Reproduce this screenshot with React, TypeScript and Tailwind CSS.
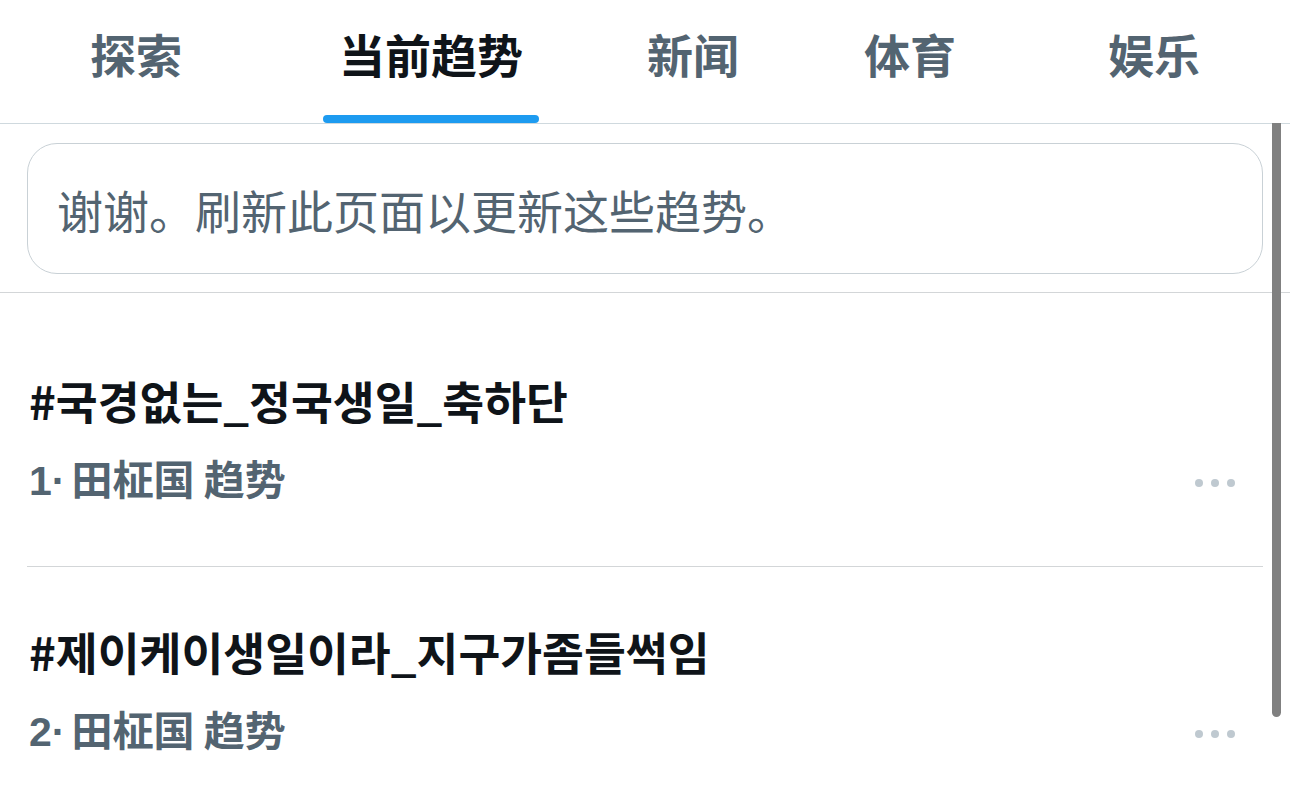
import React from 'react';

const tabs = [
  { label: '探索', width: 'w-[272px]' },
  { label: '当前趋势', width: 'w-[318px]', active: true },
  { label: '新闻', width: 'w-[206px]' },
  { label: '体育', width: 'w-[228px]' },
  { label: '娱乐', width: 'w-[260px]' },
];

const trends = [
  { rank: 1, tag: '#국경없는_정국생일_축하단', context: '田柾国 趋势' },
  { rank: 2, tag: '#제이케이생일이라_지구가좀들썩임', context: '田柾国 趋势' },
];

const MoreDots: React.FC = () => (
  <div className="flex items-center gap-[8px] pt-[8px]">
    <span className="w-[8px] h-[8px] rounded-full bg-[#bfc9d0]" />
    <span className="w-[8px] h-[8px] rounded-full bg-[#bfc9d0]" />
    <span className="w-[8px] h-[8px] rounded-full bg-[#bfc9d0]" />
  </div>
);

const App: React.FC = () => {
  return (
    <div className="relative w-[1290px] h-[804px] overflow-hidden bg-white font-['Noto_Sans_CJK_SC','Noto_Sans_CJK_KR',sans-serif]">
      {/* Tabs */}
      <div className="flex h-[124px] border-b border-[#cfd9de]">
        {tabs.map(t => (
          <div key={t.label} className={`${t.width} flex flex-col items-center`}>
            <span
              className={`pt-[20px] leading-[66px] text-[46px] font-bold ${
                t.active ? 'text-[#0f1419]' : 'text-[#536471]'
              }`}
            >
              {t.label}
            </span>
            {t.active && <div className="mt-auto w-[216px] h-[8px] rounded-full bg-[#1d9bf0]" />}
          </div>
        ))}
      </div>

      {/* Refresh notice */}
      <div className="pt-[19px] pb-[18px] border-b border-[#d3d6d8]">
        <div className="mx-[27px] h-[131px] flex items-center pl-[29px] border border-[#c9d1d6] rounded-[30px]">
          <span className="text-[46px] leading-[56px] text-[#536471]">谢谢。刷新此页面以更新这些趋势。</span>
        </div>
      </div>

      {/* Trends */}
      <div className="pt-[23px]">
        {trends.map(tr => (
          <div key={tr.rank} className="mx-[27px] pt-[56px] pb-[57px] pl-[2px] border-b border-[#d3d6d8]">
            <div className="text-[45.5px] leading-[56px] font-bold text-[#0f1419] font-['Noto_Sans_CJK_KR',sans-serif]">
              {tr.tag}
            </div>
            <div className="mt-[21px] flex items-center justify-between pr-[28px]">
              <span className="flex items-baseline text-[41px] leading-[56px] font-bold text-[#536471]">
                <span className="font-['Liberation_Sans',sans-serif]">{tr.rank}·</span>
                <span className="ml-[6px]">{tr.context}</span>
              </span>
              <MoreDots />
            </div>
          </div>
        ))}
      </div>

      {/* scrollbar */}
      <div className="absolute right-[9px] top-[123px] w-[9px] h-[594px] bg-[#808080] rounded-b-[5px]" />
    </div>
  );
};

export default App;
